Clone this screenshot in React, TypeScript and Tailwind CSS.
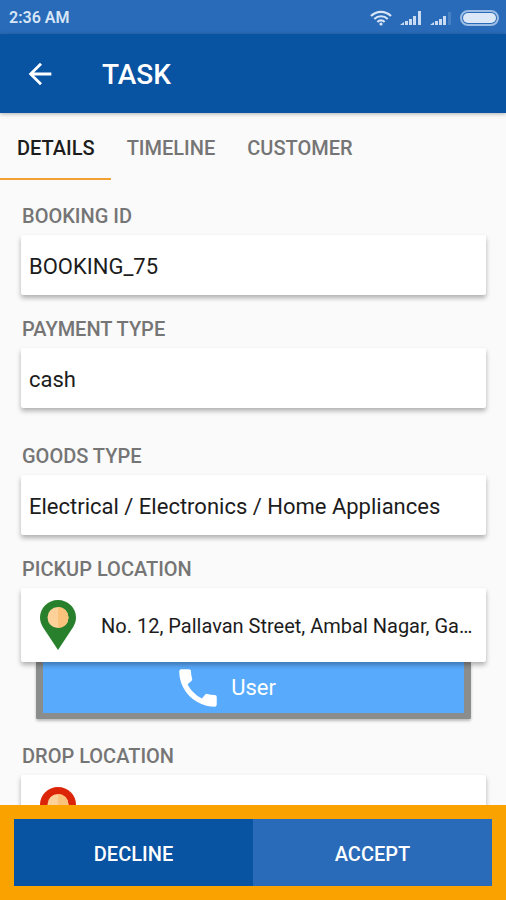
import { MdArrowBack, MdCall } from "react-icons/md";

const tabs = ["DETAILS", "TIMELINE", "CUSTOMER"];

function Signal({ faded = false }: { faded?: boolean }) {
  return (
    <svg className="h-4 w-[22px]" viewBox="0 0 22 16" fill="#c9dbf2" aria-hidden="true">
      <path d="M0 15l4-3v3z" />
      <rect x="5" y="11" width="3" height="4" />
      <rect x="9" y="9" width="3" height="6" />
      <rect x="13" y="6" width="3" height="9" />
      {faded ? (
        <rect x="18" y="2" width="3" height="13" opacity="0.2" />
      ) : (
        <rect x="18" y="1" width="3" height="14" />
      )}
    </svg>
  );
}

function StatusBar() {
  return (
    <div className="flex h-[34px] shrink-0 items-center justify-between bg-[#296bb8] pt-px pr-[7px] pl-[9px] text-[#d7e5f7]">
      <span className="pt-px text-base font-semibold">2:36 AM</span>
      <div className="flex items-center gap-2">
        <svg className="h-4 w-[22px]" viewBox="0 0 22 16" fill="none" stroke="#d7e5f7" strokeWidth="2.2" aria-hidden="true">
          <path d="M1 6a14 14 0 0 1 20 0" />
          <path d="M4.3 9a9.5 9.5 0 0 1 13.4 0" />
          <path d="M7.4 12a5 5 0 0 1 7.2 0" />
          <circle cx="11" cy="14" r="1.6" fill="#d7e5f7" stroke="none" />
        </svg>
        <Signal />
        <Signal faded />
        <div className="h-4 w-[39px] rounded-full border-2 border-[#9dbde4] p-px">
          <div className="h-full rounded-full bg-[#dce8f8]"></div>
        </div>
      </div>
    </div>
  );
}

function Pin({ color }: { color: string }) {
  return (
    <svg className="h-[50px] w-9 shrink-0" viewBox="0 0 36 50" aria-hidden="true">
      <path d="M18 0C8 0 0 8 0 17.500c0 3.500 1.200 6.500 2.800 9.500L18 50l15.200-23c1.600-3 2.800-6 2.800-9.500C36 8 28 0 18 0z" fill={color} />
      <circle cx="18" cy="17.500" r="10.500" fill="#fdd29a" />
      <path d="M18 7a10.500 10.500 0 0 1 0 21z" fill="#fbc27c" />
    </svg>
  );
}

function Field({ id, label, value }: { id: string; label: string; value: string }) {
  return (
    <div>
      <label htmlFor={id} className="mb-[7px] block pl-px text-[20px] leading-6 font-medium text-[#757575]">
        {label}
      </label>
      <input
        id={id}
        readOnly
        value={value}
        className="block h-[60px] w-full rounded-xs bg-white px-2 pt-0.5 text-[22px] text-[#1c1c1c] shadow-[0_3px_5px_rgba(0,0,0,0.3)] outline-none"
      />
    </div>
  );
}

function Location({ label, address, color }: { label: string; address: string; color: string }) {
  return (
    <div className="relative">
      <h2 className="mb-[7px] pl-px text-[20px] leading-6 font-medium text-[#757575]">{label}</h2>
      <div className="flex h-[74px] items-center gap-[25px] rounded-xs bg-white pr-3 pl-[19px] shadow-[0_3px_5px_rgba(0,0,0,0.3)]">
        <Pin color={color} />
        <p className="min-w-0 flex-1 truncate pt-0.5 text-[20px] text-[#1c1c1c]">{address}</p>
      </div>
    </div>
  );
}

export default function App() {
  return (
    <div className="flex h-screen flex-col bg-[#fafafa] font-[Roboto,sans-serif]">
      <StatusBar />
      <header className="z-10 flex h-[79px] shrink-0 items-center gap-[45px] bg-[#0853a2] pl-[23px] text-white shadow-[0_1px_4px_rgba(0,0,0,0.3)]">
        <button type="button" aria-label="Back">
          <MdArrowBack className="size-[34px]" />
        </button>
        <h1 className="pt-0.5 text-[28px] font-medium">TASK</h1>
      </header>

      <nav className="flex h-[67px] shrink-0 pl-px">
        {tabs.map((tab, i) => (
          <button
            key={tab}
            type="button"
            className={`border-b-2 px-4 pt-1 text-[20px] font-medium ${
              i === 0 ? "-ml-px border-[#f5a032] pl-[17px] text-[#1c1c1c]" : "border-transparent text-[#757575]"
            }`}
          >
            {tab}
          </button>
        ))}
      </nav>

      <main className="min-h-0 flex-1 overflow-hidden pt-6 pr-5 pl-[21px]">
        <div className="flex flex-col gap-[22px]">
          <Field id="booking" label="BOOKING ID" value="BOOKING_75" />
          <Field id="payment" label="PAYMENT TYPE" value="cash" />
          <div className="pt-[14px]">
            <Field id="goods" label="GOODS TYPE" value="Electrical / Electronics / Home Appliances" />
          </div>
          <div className="pb-[3px]">
            <Location label="PICKUP LOCATION" address="No. 12, Pallavan Street, Ambal Nagar, Gandhi Road" color="#28802c" />
            <button
              type="button"
              className="mx-[15px] flex h-[57px] w-[calc(100%-30px)] items-center justify-center gap-2 rounded-b-xs border-x-[7px] border-b-[6px] border-[#8b8d8c] bg-[#58aafc] pr-[58px] text-[22px] text-white shadow-[0_2px_3px_rgba(0,0,0,0.25)]"
            >
              <MdCall className="size-[50px]" />
              User
            </button>
          </div>
          <Location label="DROP LOCATION" address="1, Ambattur Industrial Estate, Chennai, Tamil Nadu" color="#dc2408" />
        </div>
      </main>

      <footer className="z-10 flex shrink-0 bg-[#faa300] p-[14px] text-[20px] font-medium text-white">
        <button type="button" className="h-[67px] flex-1 bg-[#0853a2] pt-0.5">
          DECLINE
        </button>
        <button type="button" className="h-[67px] flex-1 bg-[#296bb8] pt-0.5">
          ACCEPT
        </button>
      </footer>
    </div>
  );
}
